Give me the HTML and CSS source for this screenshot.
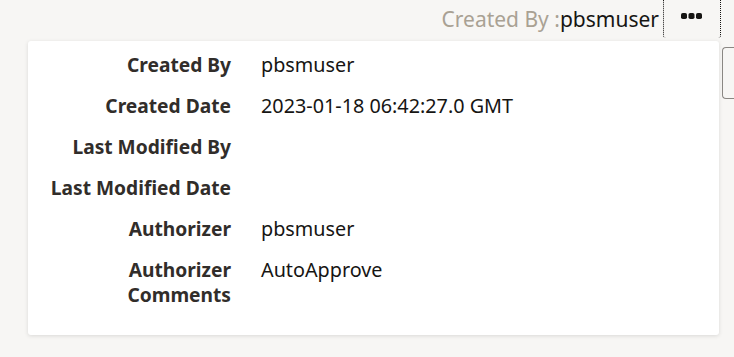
FILE: index.html
```html
<!DOCTYPE html>
<html lang="en">
  <head>
    <meta charset="UTF-8" />
    <title>Record Info</title>
    <link rel="stylesheet" href="styles.css">
  </head>
  <body>
    <div class="topbar">
      <span class="created"><span class="created-label">Created By :</span>pbsmuser</span>
      <button class="more-btn" aria-label="More">
        <svg width="21" height="6" viewBox="0 0 21 6"><rect x="0" y="0" width="6" height="6" rx="1.8"/><rect x="7.5" y="0" width="6" height="6" rx="1.8"/><rect x="15" y="0" width="6" height="6" rx="1.8"/></svg>
      </button>
    </div>
    <div class="stage">
      <div class="info-panel">
        <div class="row"><div class="label">Created By</div><div class="value">pbsmuser</div></div>
        <div class="row"><div class="label">Created Date</div><div class="value">2023-01-18 06:42:27.0 GMT</div></div>
        <div class="row"><div class="label">Last Modified By</div><div class="value"></div></div>
        <div class="row"><div class="label">Last Modified Date</div><div class="value"></div></div>
        <div class="row"><div class="label">Authorizer</div><div class="value">pbsmuser</div></div>
        <div class="row"><div class="label">Authorizer<br>Comments</div><div class="value">AutoApprove</div></div>
      </div>
      <div class="peek"></div>
    </div>
  </body>
</html>
```

FILE: styles.css
```css
body {
  margin: 0;
  font-family: "Noto Sans", sans-serif;
  color: #161513;
  background-color: #f7f6f4;
  height: 357px;
  overflow: hidden;
}
.topbar {
  display: flex;
  justify-content: flex-end;
  align-items: flex-start;
  height: 38px;
  padding-right: 13px;
}
.created {
  font-size: 21px;
  line-height: 38px;
  margin-right: 4px;
}
.created-label {
  color: #a9a193;
}
.more-btn {
  width: 58px;
  height: 38px;
  background: none;
  border: 1px dotted #161513;
  border-top: none;
  border-bottom: none;
  border-radius: 0 0 3px 3px;
  display: flex;
  align-items: center;
  justify-content: center;
  padding: 0;
}
.more-btn svg {
  fill: #161513;
  margin-top: -6px;
  margin-left: -2px;
}
.stage {
  display: flex;
  align-items: flex-start;
  margin-top: 3px;
  padding-left: 28px;
}
.info-panel {
  flex-shrink: 0;
  width: 691px;
  height: 294px;
  box-sizing: border-box;
  background: #fff;
  border-radius: 3px;
  box-shadow: 0 1px 4px rgba(0, 0, 0, 0.12);
  padding-top: 11px;
}
.row {
  display: flex;
  line-height: 25px;
  margin-bottom: 16px;
}
.label {
  width: 203px;
  text-align: right;
  font-size: 19.2px;
  font-weight: 700;
  color: #312d2a;
}
.value {
  margin-left: 30px;
  font-size: 19.8px;
}
.peek {
  flex-shrink: 0;
  width: 20px;
  height: 52px;
  margin-top: 6px;
  margin-left: 3px;
  border: 1px solid #8a8783;
  border-right: none;
  border-radius: 4px 0 0 4px;
  box-sizing: border-box;
}
```
